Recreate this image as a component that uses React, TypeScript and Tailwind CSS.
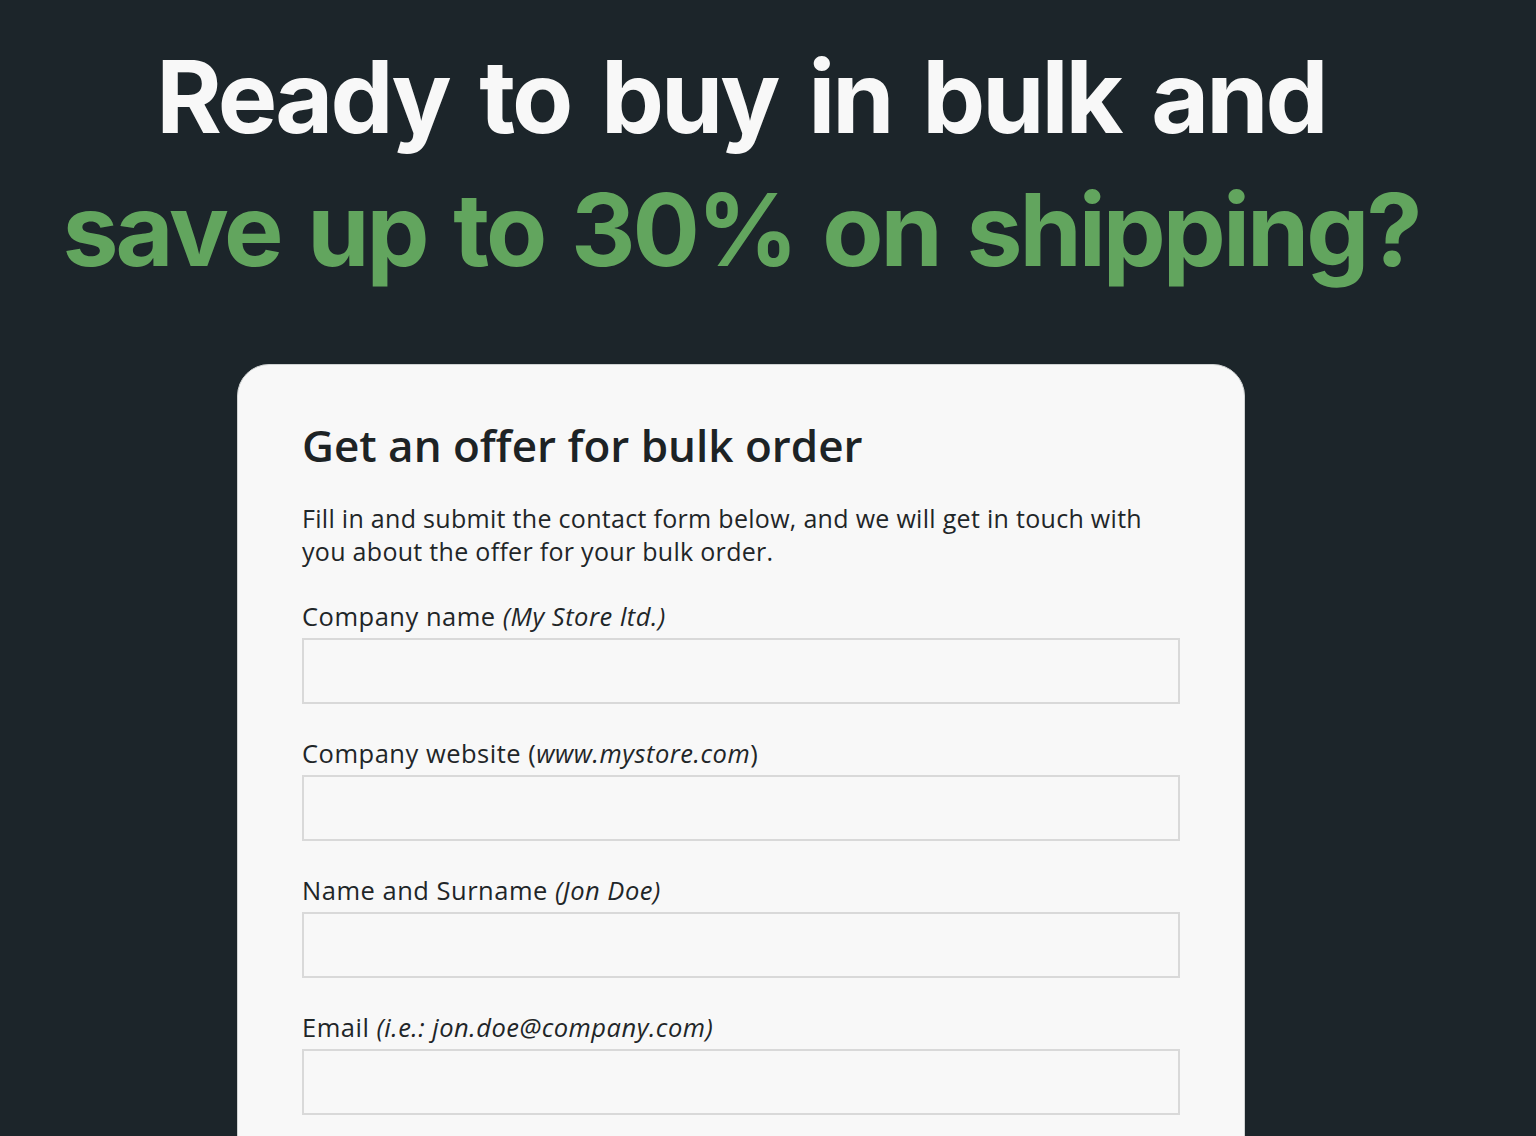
import React from 'react';

interface Field {
  label: string;
  hint: string;
  hintInParens?: boolean;
}

const fields: Field[] = [
  { label: 'Company name', hint: '(My Store ltd.)' },
  { label: 'Company website', hint: 'www.mystore.com', hintInParens: true },
  { label: 'Name and Surname', hint: '(Jon Doe)' },
  { label: 'Email', hint: '(i.e.: jon.doe@company.com)' },
];

const FormField: React.FC<{ field: Field }> = ({ field }) => (
  <label className="block">
    <span className="block text-[25.5px] leading-[34px] tracking-[0.02em] text-[#1f2628]">
      {field.label}{' '}
      {field.hintInParens ? (
        <>
          (<i>{field.hint}</i>)
        </>
      ) : (
        <i>{field.hint}</i>
      )}
    </span>
    <input
      type="text"
      className="mt-[5px] block h-[66px] w-full border-2 border-[#d9d9d9] bg-[#f8f8f8] px-4 outline-none"
    />
  </label>
);

export default function App() {
  return (
    <div className="h-[1136px] overflow-hidden bg-[#1c252a] pr-[54px]">
      <h1
        className="pt-[30px] text-center text-[100px] font-bold leading-[133px] tracking-[-0.03em] text-[#f8f8f8]"
        style={{ fontFamily: 'Inter, "Liberation Sans", sans-serif' }}
      >
        <span className="[word-spacing:10px]">Ready to buy in bulk and</span>
        <br />
        <span className="text-[#62a55e] [word-spacing:6px]">save up to 30% on shipping?</span>
      </h1>

      <div
        className="mx-auto mt-[68px] w-[1008px] rounded-t-[32px] border border-[#cfd2d2] bg-[#f8f8f8] px-[64px] pt-[48px] pb-16"
        style={{ fontFamily: '"Open Sans", "Noto Sans", sans-serif' }}
      >
        <h2 className="text-[44px] font-semibold leading-[64px] text-[#1d2325]">
          Get an offer for bulk order
        </h2>
        <p className="mt-[25px] text-[25px] leading-[33px] tracking-[0.012em] text-[#1f2628]">
          Fill in and submit the contact form below, and we will get in touch with
          you about the offer for your bulk order.
        </p>
        <div className="mt-[31px] flex flex-col gap-[32px]">
          {fields.map((f) => (
            <FormField key={f.label} field={f} />
          ))}
        </div>
      </div>
    </div>
  );
}
